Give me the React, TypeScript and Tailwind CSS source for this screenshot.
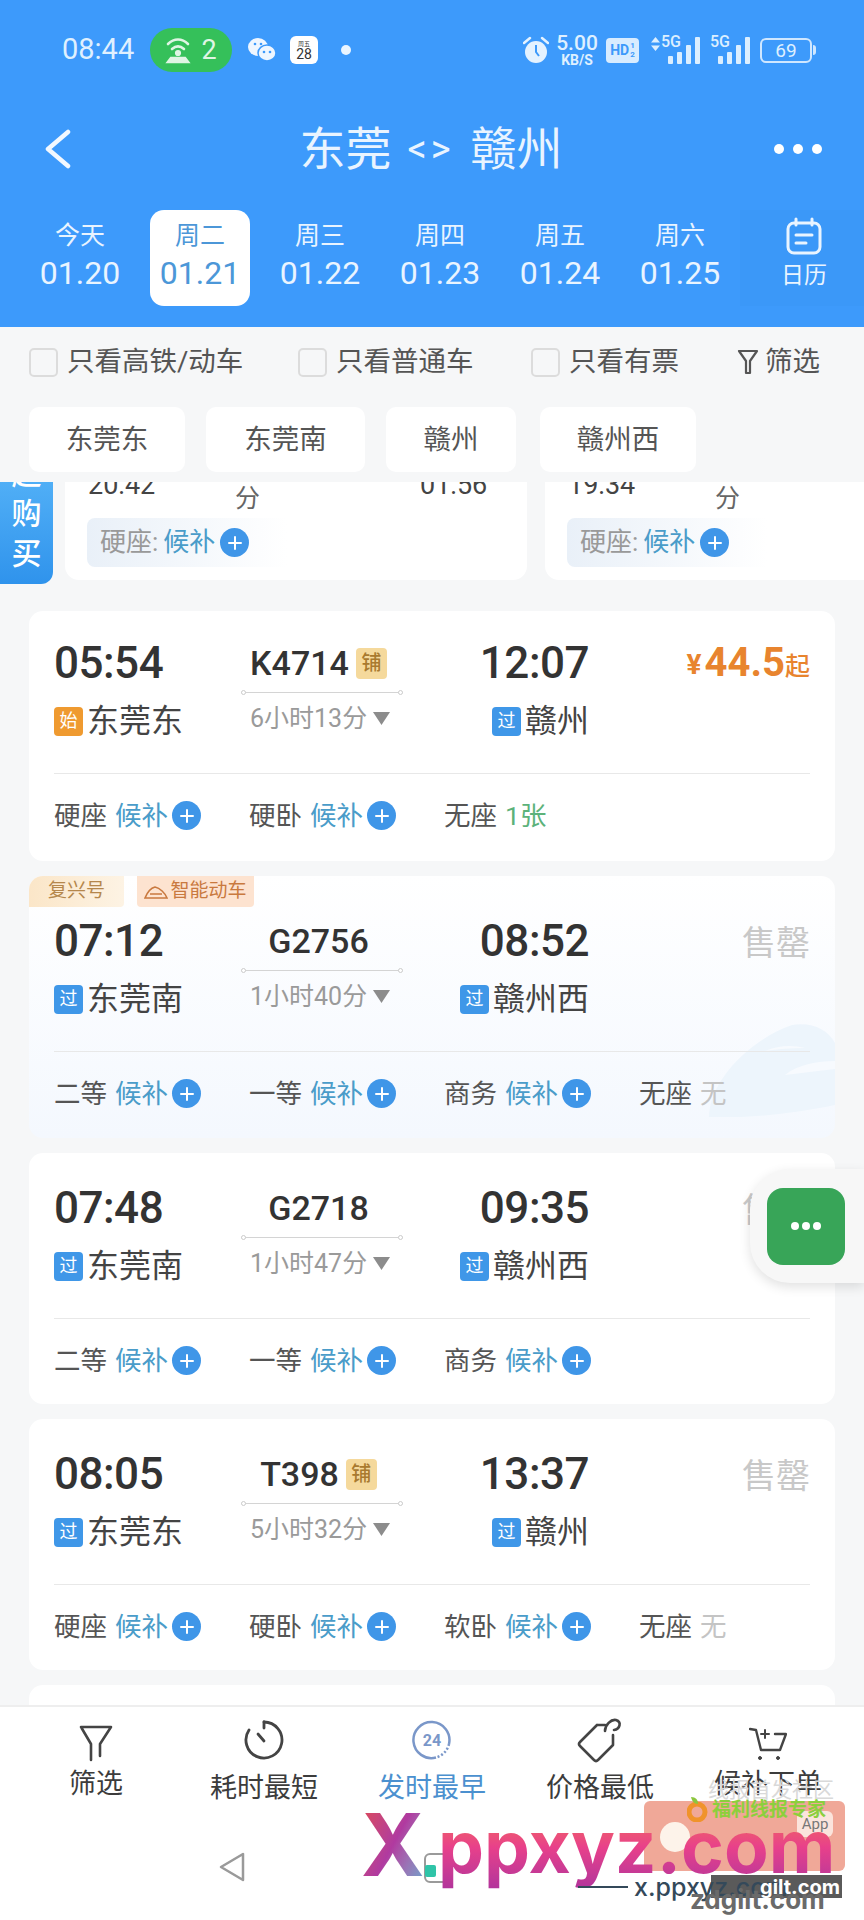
import React from 'react';

type Seat = { name: string; state: string };

type Train = {
  dep: string;
  arr: string;
  no: string;
  bed?: boolean;
  dur: string;
  depTag: string;
  from: string;
  to: string;
  price?: boolean;
  seats: Seat[];
  fuxing?: boolean;
  box: string;
};

const trains: Train[] = [
  {
    dep: '05:54', arr: '12:07', no: 'K4714', bed: true, dur: '6小时13分', depTag: '始', from: '东莞东', to: '赣州', price: true, box: 'h-[250px] pt-[26px] bg-white',
    seats: [{ name: '硬座', state: '候补' }, { name: '硬卧', state: '候补' }, { name: '无座', state: '1张' }],
  },
  {
    dep: '07:12', arr: '08:52', no: 'G2756', dur: '1小时40分', depTag: '过', from: '东莞南', to: '赣州西', fuxing: true, box: 'h-[262px] pt-[39px] bg-gradient-to-b from-white to-[#f4f8fe]',
    seats: [{ name: '二等', state: '候补' }, { name: '一等', state: '候补' }, { name: '商务', state: '候补' }, { name: '无座', state: '无' }],
  },
  {
    dep: '07:48', arr: '09:35', no: 'G2718', dur: '1小时47分', depTag: '过', from: '东莞南', to: '赣州西', box: 'h-[251px] pt-[29px] bg-white',
    seats: [{ name: '二等', state: '候补' }, { name: '一等', state: '候补' }, { name: '商务', state: '候补' }],
  },
  {
    dep: '08:05', arr: '13:37', no: 'T398', bed: true, dur: '5小时32分', depTag: '过', from: '东莞东', to: '赣州', box: 'h-[251px] pt-[29px] bg-white',
    seats: [{ name: '硬座', state: '候补' }, { name: '硬卧', state: '候补' }, { name: '软卧', state: '候补' }, { name: '无座', state: '无' }],
  },
];

const days = [
  ['今天', '01.20'],
  ['周二', '01.21'],
  ['周三', '01.22'],
  ['周四', '01.23'],
  ['周五', '01.24'],
  ['周六', '01.25'],
];

function Plus() {
  return (
    <span className="flex h-[29px] w-[29px] shrink-0 items-center justify-center rounded-full bg-[#3f96e8]">
      <svg width="16" height="16" viewBox="0 0 16 16" stroke="#fff" strokeWidth="2" strokeLinecap="round">
        <path d="M8 2v12M2 8h12" />
      </svg>
    </span>
  );
}

function StationTag({ text }: { text: string }) {
  return (
    <span className={`mr-[4px] flex h-[29px] w-[29px] shrink-0 items-center justify-center rounded-[4px] text-[18px] text-white ${text === '始' ? 'bg-[#ef9a30]' : 'bg-[#3f97e8]'}`}>
      {text}
    </span>
  );
}

function Signal({ arrows, className }: { arrows?: boolean; className: string }) {
  return (
    <div className={`relative h-[28px] ${className}`}>
      {arrows && (
        <svg className="absolute left-0 top-[1px]" width="9" height="14" viewBox="0 0 9 14" fill="#dcefff">
          <path d="M4.500 0L9 5.500H0zM4.500 14L0 8.500h9z" />
        </svg>
      )}
      <span className={`absolute top-[-3px] text-[16px] font-medium leading-[18px] text-[#dcefff] ${arrows ? 'left-[10px]' : 'left-0'}`}>5G</span>
      <svg className="absolute bottom-0 right-0" width="32" height="28" viewBox="0 0 32 28" fill="#dcefff">
        <rect x="0" y="20" width="5" height="8" rx="1" />
        <rect x="9" y="16" width="5" height="12" rx="1" />
        <rect x="18" y="9" width="5" height="19" rx="1" />
        <rect x="27" y="1" width="5" height="27" rx="1" />
      </svg>
    </div>
  );
}

function StatusBar() {
  return (
    <div className="flex h-[44px] items-center justify-between pl-[62px] pr-[48px] text-[#dff0ff]">
      <div className="flex items-center">
        <span className="w-[88px] text-[29px]">08:44</span>
        <div className="flex h-[44px] w-[82px] items-center justify-center gap-[10px] rounded-full bg-[#35c05a]">
          <svg width="26" height="30" viewBox="0 0 26 30" fill="none" stroke="#dff5e4" strokeWidth="2.600" strokeLinecap="round">
            <path d="M3 9c6-6 14-6 20 0M7 14c4-3.500 8-3.500 12 0" />
            <circle cx="13" cy="18" r="1.800" fill="#dff5e4" />
            <path d="M3 27h20l-3-4H6z" fill="#dff5e4" />
          </svg>
          <span className="text-[27px] text-[#dff5e4]">2</span>
        </div>
        <svg className="ml-[16px]" width="28" height="26" viewBox="0 0 28 26" fill="#eef6ff">
          <ellipse cx="10" cy="10" rx="10" ry="9" />
          <ellipse cx="19" cy="16" rx="9" ry="8" stroke="#3d9afb" strokeWidth="1.500" />
          <circle cx="16" cy="15" r="1.300" fill="#3d9afb" />
          <circle cx="22" cy="15" r="1.300" fill="#3d9afb" />
          <circle cx="7" cy="7" r="1.300" fill="#3d9afb" />
          <circle cx="13" cy="7" r="1.300" fill="#3d9afb" />
        </svg>
        <div className="ml-[14px] flex h-[28px] w-[28px] flex-col items-center justify-center rounded-[6px] bg-white text-[#333]">
          <span className="text-[6px] leading-[7px]">周五</span>
          <span className="text-[14px] leading-[14px]">28</span>
        </div>
        <span className="ml-[23px] h-[10px] w-[10px] rounded-full bg-[#eaf5ff]" />
      </div>
      <div className="flex items-center">
        <svg width="26" height="28" viewBox="0 0 26 28" fill="#e4f2ff">
          <circle cx="13" cy="16" r="11" />
          <path d="M1 7l6-5M25 7l-6-5" stroke="#e4f2ff" strokeWidth="2.500" strokeLinecap="round" />
          <path d="M13 9v7l3 4" stroke="#3d9afb" strokeWidth="2" fill="none" />
        </svg>
        <div className="ml-[6px] flex w-[44px] flex-col items-center">
          <span className="text-[21px] font-medium leading-[19px]">5.00</span>
          <span className="text-[14px] font-bold leading-[14px]">KB/S</span>
        </div>
        <div className="ml-[7px] flex h-[25px] w-[33px] items-center justify-center rounded-[4px] bg-[#d8ecff] text-[14px] font-bold leading-none text-[#3d9afb]">
          HD
          <span className="ml-[1px] flex flex-col text-[8px] leading-[9px]">
            <span>1</span>
            <span>2</span>
          </span>
        </div>
        <Signal arrows className="ml-[12px] w-[49px]" />
        <Signal className="ml-[10px] w-[40px]" />
        <div className="ml-[10px] flex items-center">
          <div className="flex h-[25px] w-[52px] items-center justify-center rounded-[6px] border-2 border-[#cfe7ff] text-[19px] leading-none">69</div>
          <span className="ml-[1px] h-[10px] w-[3px] rounded-r bg-[#cfe7ff]" />
        </div>
      </div>
    </div>
  );
}

function Header() {
  return (
    <header className="h-[327px] shrink-0 bg-[#3d9afb] pt-[28px] text-[#e9f4ff]">
      <StatusBar />
      <div className="mt-[38px] flex h-[78px] items-center justify-between pl-[44px] pr-[42px]">
        <svg width="28" height="40" viewBox="0 0 28 40" fill="none" stroke="#f2f8ff" strokeWidth="4.500" strokeLinecap="round" strokeLinejoin="round">
          <path d="M24 3L4 20l20 17" />
        </svg>
        <div className="ml-[16px] flex items-center text-[46px] leading-none">
          <span>东莞</span>
          <span className="mx-[16px] text-[38px] tracking-[4px]">&lt;&gt;</span>
          <span>赣州</span>
        </div>
        <div className="flex w-[48px] justify-between">
          <span className="h-[10px] w-[10px] rounded-full bg-white" />
          <span className="h-[10px] w-[10px] rounded-full bg-white" />
          <span className="h-[10px] w-[10px] rounded-full bg-white" />
        </div>
      </div>
      <div className="mt-[22px] flex h-[96px] pl-[20px]">
        {days.map(([label, date], i) => (
          <div key={date} className="flex w-[120px] justify-center">
            <div className={`flex h-[96px] w-[100px] flex-col items-center justify-center rounded-[14px] pb-[7px] ${i === 1 ? 'bg-white text-[#4c97d8]' : ''}`}>
              <span className="text-[25px] leading-[36px]">{label}</span>
              <span className="text-[32px] leading-[38px]">{date}</span>
            </div>
          </div>
        ))}
        <div className="flex w-[124px] flex-col items-center justify-center bg-[#3b98f8] pb-[7px] pl-[4px]">
          <svg width="36" height="38" viewBox="0 0 36 38" fill="none" stroke="#e9f4ff" strokeWidth="3" strokeLinecap="round">
            <rect x="2" y="6" width="32" height="30" rx="6" />
            <path d="M10 2v6M26 2v6M10 18h16M10 26h10" />
          </svg>
          <span className="mt-[5px] text-[23px] leading-[32px]">日历</span>
        </div>
      </div>
    </header>
  );
}

function Check({ label, className }: { label: string; className: string }) {
  return (
    <div className={`flex items-center ${className}`}>
      <span className="mr-[9px] h-[29px] w-[29px] rounded-[5px] border-2 border-[#dcdcdc] bg-[#f6f7f8]" />
      <span>{label}</span>
    </div>
  );
}

function Filters() {
  return (
    <div className="h-[155px] shrink-0 bg-[#f6f7f8] pl-[29px] text-[27.500px] text-[#555]">
      <div className="flex h-[68px] items-center pt-[2px]">
        <Check label="只看高铁/动车" className="w-[269px]" />
        <Check label="只看普通车" className="w-[233px]" />
        <Check label="只看有票" className="w-[206px]" />
        <svg width="22" height="28" viewBox="0 0 22 28" fill="none" stroke="#555" strokeWidth="2.200" strokeLinejoin="round">
          <path d="M2 3h18l-7 10v12h-4V13z" />
        </svg>
        <span className="ml-[6px]">筛选</span>
      </div>
      <div className="mt-[12px] flex">
        <div className="flex h-[65px] w-[156px] items-center justify-center rounded-[10px] bg-white">东莞东</div>
        <div className="ml-[21px] flex h-[65px] w-[159px] items-center justify-center rounded-[10px] bg-white">东莞南</div>
        <div className="ml-[21px] flex h-[65px] w-[130px] items-center justify-center rounded-[10px] bg-white">赣州</div>
        <div className="ml-[24px] flex h-[65px] w-[156px] items-center justify-center rounded-[10px] bg-white">赣州西</div>
      </div>
    </div>
  );
}

function PartialCard({ dep, arr, className }: { dep: string; arr?: string; className: string }) {
  return (
    <div className={`h-[128px] shrink-0 overflow-hidden rounded-b-[14px] bg-white ${className}`}>
      <div className="relative h-[66px] pl-[23px] pt-[15px] text-[27px] leading-[36px] text-[#444]">
        <span>{dep}</span>
        <span className="absolute left-[170px] top-[32px] text-[25px] leading-[30px] text-[#666]">分</span>
        <span className="absolute left-[190px] top-[27px] h-[3px] w-[6px] bg-[#888]" />
        <span className="absolute left-[222px] top-[27px] h-[3px] w-[6px] bg-[#888]" />
        {arr && <span className="absolute left-[355px] top-[15px]">{arr}</span>}
      </div>
      <div className="ml-[22px] flex h-[49px] w-[200px] items-center rounded-l-[8px] bg-gradient-to-r from-[#e9f0f8] to-white pl-[13px] text-[26px]">
        <span className="text-[#999]">硬座:</span>
        <span className="ml-[5px] mr-[5px] text-[#4a9cc9]">候补</span>
        <Plus />
      </div>
    </div>
  );
}

function SeatCell({ seat }: { seat: Seat }) {
  const color = seat.state === '候补' ? 'text-[#4a9cc9]' : seat.state === '无' ? 'text-[#c4c4c4]' : 'text-[#5cb27a]';
  return (
    <div className="flex items-center text-[26.500px]">
      <span className="text-[#555]">{seat.name}</span>
      <span className={`ml-[8px] mr-[4px] ${color}`}>{seat.state}</span>
      {seat.state === '候补' && <Plus />}
    </div>
  );
}

function TrainCard({ t }: { t: Train }) {
  return (
    <div className={`relative shrink-0 overflow-hidden rounded-[14px] px-[25px] ${t.box}`}>
      {t.fuxing && (
        <>
          <svg className="absolute bottom-[21px] right-0" width="128" height="94" viewBox="0 0 128 94">
            <path d="M2 94C2 60 40 18 85 2c20-3 35 4 43 18v62C90 90 40 96 2 94z" fill="#edf5fc" />
            <path d="M78 52c12-10 32-14 50-14v8c-18 2-33 4-50 6zM58 28c14-6 28-6 40-3-14 0-28 1-40 3z" fill="#f7fafe" />
          </svg>
          <div className="absolute left-0 top-0 flex h-[31px] w-[95px] items-center justify-center rounded-br-[4px] bg-gradient-to-r from-[#fbe6c8] to-[#fdf3e4] text-[19px] text-[#b5874c]">复兴号</div>
          <div className="absolute left-[108px] top-0 flex h-[31px] w-[117px] items-center justify-center gap-[2px] rounded-b-[4px] bg-[#fde3d0] text-[19px] text-[#c9793f]">
            <svg width="24" height="14" viewBox="0 0 24 14" fill="none" stroke="#c9793f" strokeWidth="1.600">
              <path d="M1 13h22c-2-5-7-10-12-11C7 3 3 8 1 13zM6 9h12" />
            </svg>
            智能动车
          </div>
        </>
      )}
      <div className="relative grid grid-cols-[187px_162px_186px_1fr]">
        <span className="h-[52px] text-[44px] font-medium leading-[52px] tracking-[-0.5px] text-[#333]">{t.dep}</span>
        <div className="flex h-[52px] items-center justify-center pr-[7px] text-[34px] font-medium text-[#333]">
          <span>{t.no}</span>
          {t.bed && (
            <span className="ml-[7px] flex h-[31px] w-[31px] items-center justify-center rounded-[4px] bg-[#f5d99c] text-[20px] font-medium text-[#a97a2f]">铺</span>
          )}
        </div>
        <span className="h-[52px] text-right text-[44px] font-medium leading-[52px] tracking-[-0.5px] text-[#333]">{t.arr}</span>
        {t.price ? (
          <div className="flex h-[52px] items-center justify-end font-bold text-[#e8842e]">
            <span className="mr-[3px] mt-[4px] text-[28px]">¥</span>
            <span className="text-[40px]">44.5</span>
            <span className="mt-[8px] text-[25px] font-medium">起</span>
          </div>
        ) : (
          <div className="flex h-[52px] items-center justify-end pt-[4px] text-[34px] text-[#c8c8c8]">售罄</div>
        )}
      </div>
      <div className="relative mt-[12px] grid grid-cols-[187px_162px_186px_1fr]">
        <div className="flex h-[40px] items-center text-[32px] leading-none text-[#444]">
          <StationTag text={t.depTag} />
          {t.from}
        </div>
        <div className="relative h-[40px]">
          <div className="absolute left-0 right-0 top-[-9px] h-px bg-[#d4d4d4]">
            <span className="absolute left-0 top-[-2px] h-[5px] w-[5px] rounded-full border border-[#ccc] bg-white" />
            <span className="absolute right-0 top-[-2px] h-[5px] w-[5px] rounded-full border border-[#ccc] bg-white" />
          </div>
          <div className="flex h-[34px] items-center pl-[9px] text-[25px] leading-none text-[#9a9a9a]">
            {t.dur}
            <svg className="ml-[6px]" width="17" height="13" viewBox="0 0 17 13" fill="#8c8c8c">
              <path d="M0 0h17L8.500 13z" />
            </svg>
          </div>
        </div>
        <div className="flex h-[40px] items-center justify-end text-[32px] leading-none text-[#444]">
          <StationTag text="过" />
          {t.to}
        </div>
      </div>
      <div className="relative mt-[32px] h-px bg-[#e8e8e8]" />
      <div className="relative mt-[22px] grid grid-cols-[195px_195px_195px_1fr]">
        {t.seats.map((s) => (
          <SeatCell key={s.name} seat={s} />
        ))}
      </div>
    </div>
  );
}

function List() {
  return (
    <div className="relative flex-1 overflow-hidden">
      <div className="mt-[-30px] flex gap-[18px] pl-[65px]">
        <PartialCard dep="20:42" arr="01:56" className="w-[462px]" />
        <PartialCard dep="19:34" className="w-[400px]" />
      </div>
      <div className="mt-[31px] flex flex-col gap-[15px] px-[29px]">
        {trains.map((t) => (
          <TrainCard key={t.no} t={t} />
        ))}
        <div className="h-[60px] shrink-0 rounded-t-[14px] bg-white" />
      </div>

      <div className="absolute left-0 top-[-20px] flex h-[122px] w-[53px] flex-col items-center justify-end rounded-br-[12px] bg-gradient-to-b from-[#56b4f8] to-[#2f93ec] pb-[10px] text-[30px] font-medium leading-[40px] text-white">
        <span>超</span>
        <span>购</span>
        <span>买</span>
      </div>

      <div className="absolute right-0 top-[687px] flex h-[114px] w-[114px] items-center rounded-l-[40px] bg-[#f7f7f7] pl-[17px] shadow-[0_4px_12px_rgba(0,0,0,0.12)]">
        <div className="flex h-[77px] w-[78px] items-center justify-center gap-[3px] rounded-[16px] bg-[#38a558]">
          <span className="h-[8px] w-[8px] rounded-full bg-white" />
          <span className="h-[8px] w-[8px] rounded-full bg-white" />
          <span className="h-[8px] w-[8px] rounded-full bg-white" />
        </div>
      </div>
    </div>
  );
}

function FooterItem({ icon, label, active, labelTop }: { icon: React.ReactNode; label: string; active?: boolean; labelTop: string }) {
  return (
    <div className="flex w-[168px] flex-col items-center">
      <div className="flex h-[48px] items-center">{icon}</div>
      <span className={`text-[27px] leading-[36px] ${labelTop} ${active ? 'text-[#4b90cf]' : 'text-[#3c3c3c]'}`}>{label}</span>
    </div>
  );
}

function Footer() {
  return (
    <footer className="relative h-[215px] shrink-0 overflow-hidden border-t-2 border-[#eeeeee] bg-white">
      <div className="flex pl-[12px] pt-[9px]">
        <FooterItem
          label="筛选"
          labelTop="mt-[2px]"
          icon={
            <svg className="mt-[6px]" width="34" height="38" viewBox="0 0 34 38" fill="none" stroke="#444" strokeWidth="2.600" strokeLinecap="round" strokeLinejoin="round">
              <path d="M2 3h30L21 20v12M2 3l10 17v16" />
            </svg>
          }
        />
        <FooterItem
          label="耗时最短"
          labelTop="mt-[6px]"
          icon={
            <svg width="40" height="42" viewBox="0 0 40 42" fill="none" stroke="#444" strokeWidth="2.800" strokeLinecap="round">
              <path d="M20 3a18 18 0 1 1-15 8" />
              <path d="M20 3v6M14 15l6 7" />
            </svg>
          }
        />
        <FooterItem
          label="发时最早"
          labelTop="mt-[6px]"
          active
          icon={
            <svg width="40" height="42" viewBox="0 0 40 42" fill="none" stroke="#7a97c9" strokeWidth="2.500">
              <path d="M37 25A18 18 0 1 0 24 38.500" />
              <path d="M37 25a18 18 0 0 1-13 13.500" strokeDasharray="2 2" />
              <text x="20" y="27" textAnchor="middle" fontSize="16" fontWeight="700" fill="#7a97c9" stroke="none" fontFamily="Roboto">24</text>
            </svg>
          }
        />
        <FooterItem
          label="价格最低"
          labelTop="mt-[6px]"
          icon={
            <svg width="46" height="46" viewBox="0 0 46 46" fill="none" stroke="#444" strokeWidth="2.600" strokeLinejoin="round" strokeLinecap="round">
              <path d="M20 8L3 25q-2 2 0 4l14 14q2 2 4 0l15-15V18M20 8h8" />
              <path d="M28 14c0-6 6-12 11-11 6 2 4 9-2 10" />
            </svg>
          }
        />
        <FooterItem
          label="候补下单"
          labelTop="mt-[2px]"
          icon={
            <svg className="mt-[8px]" width="38" height="34" viewBox="0 0 38 34" fill="none" stroke="#444" strokeWidth="2.400" strokeLinecap="round" strokeLinejoin="round">
              <path d="M1 2l6 1 5 20h19l6-16H26" />
              <path d="M16 3v8M12 7h8" strokeWidth="2" />
              <circle cx="11" cy="31" r="1.500" fill="#444" strokeWidth="1" />
              <circle cx="29" cy="31" r="1.500" fill="#444" strokeWidth="1" />
            </svg>
          }
        />
      </div>

      {/* system nav */}
      <svg className="absolute left-[218px] top-[144px]" width="28" height="32" viewBox="0 0 28 32" fill="none" stroke="#9a9a9a" strokeWidth="2.500" strokeLinejoin="round">
        <path d="M25 3v26L3 16z" />
      </svg>
      <div className="absolute left-[424px] top-[146px] h-[30px] w-[28px] rounded-[6px] border-2 border-[#9a9a9a]" />

      {/* watermark over the page */}
      <div className="absolute left-[644px] top-[94px] h-[70px] w-[201px] rounded-[6px] bg-[#f0a898]" />
      <span className="absolute left-[660px] top-[115px] h-[30px] w-[30px] rounded-full bg-[#fdf3ea]" />
      <span className="absolute left-[797px] top-[104px] flex h-[26px] w-[36px] items-center justify-center rounded-[6px] bg-[#fbe4dc] text-[15px] text-[#777]">App</span>
      <svg className="absolute left-[687px] top-[89px]" width="22" height="26" viewBox="0 0 22 26">
        <circle cx="10" cy="16" r="8" fill="none" stroke="#f0932b" strokeWidth="5" />
        <path d="M4 1c5 0 7 3 7 7C7 8 5 5 4 1z" fill="#8cc63f" />
      </svg>
      <span className="absolute left-[712px] top-[89px] text-[19px] font-bold leading-[28px] text-[#8ccf3c]">福利线报专家</span>
      <span className="absolute left-[708px] top-[68px] text-[21px] leading-[30px] text-[#d9d9d9]">线报首发社区</span>
      <span className="absolute left-[361px] top-[78px] bg-gradient-to-br from-[#e8483a] via-[#b03aa0] to-[#22b8d8] bg-clip-text font-[Inter] text-[86px] font-bold leading-[120px] text-transparent">X</span>
      <span className="absolute left-[425px] top-[158px] h-[12px] w-[11px] rounded-[2px] bg-[#2fc4a8]" />
      <span className="absolute left-[438px] top-[90px] bg-gradient-to-b from-[#f7761f] via-[#e8408a] to-[#a8309e] bg-clip-text font-[Inter] text-[73px] font-bold leading-[100px] text-transparent">ppxyz.com</span>
      <div className="absolute left-[711px] top-[168px] h-[23px] w-[131px] bg-[#5a5a5a]" />
      <div className="absolute left-[578px] top-[179px] h-[2px] w-[50px] bg-[#34495a]" />
      <span className="absolute left-[634px] top-[164px] font-[Inter] text-[25px] font-medium leading-[32px] text-[#34495a]">x.ppxyz.com</span>
      <span className="absolute left-[760px] top-[167px] font-[Inter] text-[20px] font-bold leading-[26px] text-white">gilt.com</span>
      <span className="absolute left-[690px] top-[178px] font-[Inter] text-[26px] font-bold leading-[30px] text-[#6a6a6a]">zdgilt.com</span>
    </footer>
  );
}

export default function App() {
  return (
    <div className="flex h-[1920px] w-[864px] flex-col overflow-hidden bg-[#f6f7f8] font-[Roboto,'Noto_Sans_CJK_SC',sans-serif]">
      <Header />
      <Filters />
      <List />
      <Footer />
    </div>
  );
}
